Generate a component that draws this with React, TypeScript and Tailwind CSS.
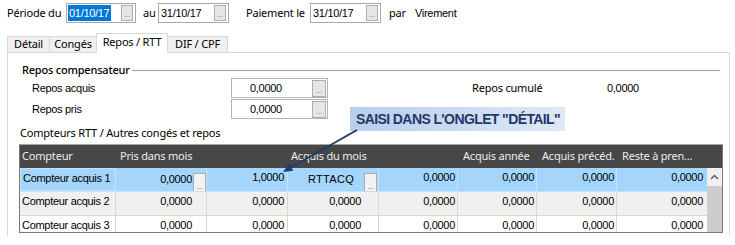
import React from 'react';

const SEG = "font-['Noto_Sans','Open_Sans',sans-serif] text-[11px] tracking-[-0.2px]";
const MS = "font-['Liberation_Sans',Arial,sans-serif] text-[11px] tracking-[-0.3px]";

function DotsBtn({ className = '' }: { className?: string }) {
  return (
    <div
      className={`flex items-end justify-center border border-[#adadad] bg-[#e6e6e6] pb-[2px] font-['Liberation_Sans',Arial,sans-serif] text-[8px] leading-[6px] text-[#707070] ${className}`}
    >
      ...
    </div>
  );
}

function TopInput({ value, selected = false, className = '' }: { value: string; selected?: boolean; className?: string }) {
  return (
    <div className={`flex h-[20px] items-center border border-[#a8a8a8] bg-white ${className}`}>
      <span
        className={`ml-[1px] h-[16px] pl-[1px] pr-[2px] leading-[16px] ${MS} tracking-[-0.1px] ${
          selected ? 'bg-[#0078d7] text-white' : 'text-black'
        }`}
      >
        {value}
      </span>
      <div className="flex-1" />
      <DotsBtn className="mr-[2px] h-[16px] w-[12px]" />
    </div>
  );
}

function ReposInput({ value }: { value: string }) {
  return (
    <div className="flex h-[20px] w-[97px] items-center border border-[#b4b4b4] bg-white">
      <span className={`pl-[18px] leading-[16px] ${MS}`}>{value}</span>
      <div className="flex-1" />
      <DotsBtn className="mr-[1px] h-[17px] w-[14px]" />
    </div>
  );
}

type RowProps = { label: string; selected?: boolean; bg: string; h: string };

function GridRow({ label, selected = false, bg, h }: RowProps) {
  const sep = selected ? 'border-[#c4e2f8]' : 'border-[#ddd6cd]';
  const cell = `h-full shrink-0 border-r ${sep} pt-[2px] leading-[14px] ${MS}`;
  return (
    <div className={`flex shrink-0 overflow-hidden ${h} ${bg} ${selected ? 'border-b border-[#c4e2f8]' : ''}`}>
      <div className={`${cell} w-[96px] pl-[2px] whitespace-nowrap ${selected ? 'border border-[#4a4a4a]' : ''}`}>{label}</div>
      {selected ? (
        <div className={`${cell} flex w-[91px] justify-end pt-0`}>
          <span className="pt-[2px] pr-[1px]">0,0000</span>
          <DotsBtn className="mt-[3px] h-[20px] w-[13px] bg-[#f2f2f2]" />
        </div>
      ) : (
        <div className={`${cell} w-[91px] pr-[14px] text-right`}>0,0000</div>
      )}
      <div className={`${cell} w-[81px] pr-[3px] text-right`}>{selected ? '1,0000' : '0,0000'}</div>
      {selected ? (
        <div className={`${cell} flex w-[91px] pt-0`}>
          <span className="pl-[20px] pt-[2px] tracking-[0.3px]">RTTACQ</span>
          <div className="flex-1" />
          <DotsBtn className="mt-[3px] mr-[1px] h-[20px] w-[13px] bg-[#f2f2f2]" />
        </div>
      ) : (
        <div className={`${cell} w-[91px] pr-[17px] text-right`}>0,0000</div>
      )}
      <div className={`${cell} w-[79px] pr-[2px] text-right`}>0,0000</div>
      <div className={`${cell} w-[79px] pr-[2px] text-right`}>0,0000</div>
      <div className={`${cell} w-[80px] pr-[2px] text-right`}>0,0000</div>
      <div className={`${cell} w-[90px] border-r-0 pr-[4px] text-right`}>0,0000</div>
    </div>
  );
}

export default function App() {
  return (
    <div className="relative h-[245px] w-[735px] overflow-hidden bg-white text-black">
      {/* Top row */}
      <div className={`mt-[3px] flex h-[20px] items-center pl-[7px] ${SEG}`}>
        <span className="w-[59px] whitespace-nowrap">Période du</span>
        <TopInput value="01/10/17" selected className="w-[70px]" />
        <span className="ml-[7px] w-[15px]">au</span>
        <TopInput value="31/10/17" className="w-[71px]" />
        <span className="ml-[17px] w-[64px] whitespace-nowrap">Paiement le</span>
        <TopInput value="31/10/17" className="w-[71px]" />
        <span className="ml-[8px] w-[26px]">par</span>
        <span className={MS}>Virement</span>
      </div>

      {/* Tabs */}
      <div className={`ml-[7px] mt-[11px] flex h-[18px] items-end ${SEG}`}>
        <div className="flex h-[16px] w-[42px] items-center justify-center border-l border-t border-[#d9d9d9] bg-[#f0f0f0]">Détail</div>
        <div className="flex h-[16px] w-[47px] items-center justify-center border-l border-t border-[#d9d9d9] bg-[#f0f0f0]">Congés</div>
        <div className="relative z-10 mb-[-1px] flex h-[20px] w-[72px] items-center justify-center border-l border-r border-t border-[#d9d9d9] bg-white pb-[2px]">
          Repos / RTT
        </div>
        <div className="flex h-[16px] w-[60px] items-center justify-center border-r border-t border-[#d9d9d9] bg-[#f0f0f0]">DIF / CPF</div>
      </div>

      {/* Panel */}
      <div className="ml-[7px] flex h-[184px] w-[723px] flex-col border-l border-r border-t border-[#d9d9d9]">
        <div className="mt-[9px] flex h-[16px] items-center pl-[14px] pr-[9px]">
          <span className={`${SEG} font-medium whitespace-nowrap`}>Repos compensateur</span>
          <div className="ml-[2px] h-px flex-1 bg-[#a0a0a0]" />
        </div>

        <div className="flex h-[20px] items-center pl-[24px]">
          <span className={`w-[199px] ${MS}`}>Repos acquis</span>
          <ReposInput value="0,0000" />
          <span className={`ml-[144px] w-[135px] ${SEG}`}>Repos cumulé</span>
          <span className={MS}>0,0000</span>
        </div>
        <div className="mt-[1px] flex h-[20px] items-center pl-[24px]">
          <span className={`w-[199px] ${MS}`}>Repos pris</span>
          <ReposInput value="0,0000" />
        </div>

        <div className={`mt-[6px] h-[16px] pl-[12px] leading-[16px] ${SEG}`}>Compteurs RTT / Autres congés et repos</div>

        {/* Grid */}
        <div className="ml-[11px] mt-[3px] flex h-[89px] w-[704px] flex-col overflow-hidden border border-[#7a7a7a] border-t-[#a8a8a8]">
          <div className={`flex h-[23px] shrink-0 items-center bg-[#474747] text-[#ececec] ${SEG}`}>
            <div className="w-[96px] pl-[2px]">Compteur</div>
            <div className="w-[172px] pl-[4px]">Pris dans mois</div>
            <div className="w-[170px] pl-[3px]">Acquis du mois</div>
            <div className="w-[79px] pl-[5px] whitespace-nowrap">Acquis année</div>
            <div className="w-[80px] pl-[5px] whitespace-nowrap">Acquis précéd.</div>
            <div className="w-[105px] pl-[5px] whitespace-nowrap">Reste à pren...</div>
          </div>
          <div className="flex h-[64px]">
            <div className="flex w-[687px] flex-col overflow-hidden">
              <GridRow label="Compteur acquis 1" selected bg="bg-[#a3d5fd]" h="h-[24px]" />
              <GridRow label="Compteur acquis 2" bg="bg-[#f0f0f0] border-b border-[#ddd6cd]" h="h-[24px]" />
              <GridRow label="Compteur acquis 3" bg="bg-white" h="h-[16px]" />
            </div>
            <div className="flex w-[15px] flex-col bg-[#f0f0f0]">
              <div className="flex h-[18px] items-center justify-center">
                <svg width="9" height="6" viewBox="0 0 9 6">
                  <path d="M1 5 L4.5 1.5 L8 5" fill="none" stroke="#606060" strokeWidth="1.5" />
                </svg>
              </div>
              <div className="flex-1 bg-[#cdcdcd]" />
            </div>
          </div>
        </div>
      </div>

      {/* Annotation */}
      <div className="absolute left-[350px] top-[107px] flex h-[24px] w-[215px] items-center bg-linear-to-r from-[#b9cdee] to-[#dfe8f7] pl-[6px]">
        <span className="whitespace-nowrap font-['Liberation_Sans',Arial,sans-serif] text-[14px] font-bold tracking-[-0.6px] text-[#1f3864]">
          SAISI DANS L'ONGLET "DÉTAIL"
        </span>
      </div>
      <svg className="pointer-events-none absolute left-0 top-0" width="735" height="245" viewBox="0 0 735 245">
        <line x1="357" y1="130" x2="291" y2="167.5" stroke="#1f3c6e" strokeWidth="2" />
        <polygon points="283,172 293.4,170.8 289.2,163.6" fill="#1f3c6e" />
      </svg>
    </div>
  );
}
